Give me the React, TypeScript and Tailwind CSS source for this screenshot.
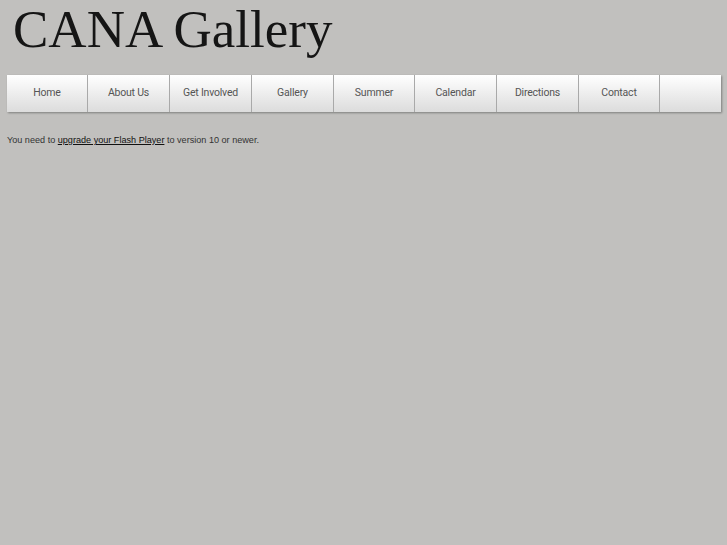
import React from "react";

const items: { label: string; w: string }[] = [
  { label: "Home", w: "w-[81px]" },
  { label: "About Us", w: "w-[82px]" },
  { label: "Get Involved", w: "w-[82px]" },
  { label: "Gallery", w: "w-[82px]" },
  { label: "Summer", w: "w-[81px]" },
  { label: "Calendar", w: "w-[82px]" },
  { label: "Directions", w: "w-[82px]" },
  { label: "Contact", w: "w-[81px]" },
  { label: "", w: "w-[61px]" },
];

export default function App() {
  return (
    <div className="min-h-[545px] w-full bg-[#c1c0be]">
      <div
        className="pl-[13px] h-[75px] text-[53px] leading-[58px] text-[#151515]"
        style={{ fontFamily: '"Liberation Serif", "DejaVu Serif", serif' }}
      >
        CANA Gallery
      </div>
      <div className="ml-[7px] flex h-[37px] w-[714px] shadow-[1px_1px_2px_rgba(0,0,0,0.35)]">
        {items.map((it, i) => (
          <div
            key={i}
            className={`${it.w} flex items-center justify-center bg-gradient-to-b from-[#ffffff] to-[#dcdcdc] pb-[1px] text-[10.5px] tracking-[-0.2px] text-[#555] ${
              i < items.length - 1 ? "border-r border-[#a9a9a9]" : ""
            }`}
            style={{ fontFamily: 'Roboto, "DejaVu Sans", sans-serif' }}
          >
            {it.label}
          </div>
        ))}
      </div>
      <div
        className="pl-[7px] pt-[22px] text-[9.1px] text-[#333]"
        style={{ fontFamily: '"Liberation Sans", Arial, sans-serif' }}
      >
        You need to <span className="underline text-[#111]">upgrade your Flash Player</span> to version 10 or newer.
      </div>
    </div>
  );
}
